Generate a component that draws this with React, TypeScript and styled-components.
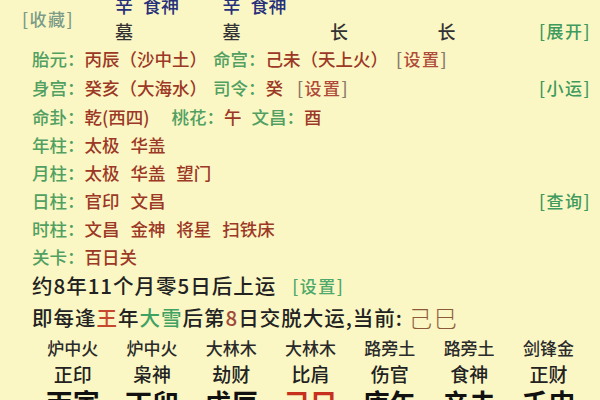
import React from 'react';
import styled, { createGlobalStyle } from 'styled-components';

const Global = createGlobalStyle`
  html, body { margin: 0; padding: 0; background: #fbf7c4; }
  body { font-family: "Noto Sans CJK SC", "Noto Sans", sans-serif; font-weight: 500; }
`;

const Page = styled.div`
  width: 600px;
  height: 400px;
  overflow: hidden;
  background: #fbf7c4;
`;

const Header = styled.div`
  display: grid;
  grid-template-columns: 115px repeat(3, 107.5px) 1fr auto;
  grid-template-rows: 26px 26px;
  margin-top: -8px;
  padding-right: 9px;
  font-size: 18px;
  line-height: 26px;
`;

const BracketLink = styled.span`
  font-size: 17px;
  letter-spacing: 1.5px;
  white-space: nowrap;
`;

const Collect = styled(BracketLink)`
  grid-row: 1 / 3;
  grid-column: 1;
  align-self: center;
  padding-left: 22px;
  padding-top: 2px;
  color: #7c9c88;
`;

const GodCell = styled.div<{ $col: number }>`
  grid-row: 1;
  grid-column: ${(p) => p.$col};
  color: #27307a;
  word-spacing: 6px;
`;

const StageCell = styled.div<{ $col: number }>`
  grid-row: 2;
  grid-column: ${(p) => p.$col};
  color: #333;
`;

const SideLink = styled(BracketLink)`
  margin-left: auto;
  color: #3f9a5e;
`;

const Expand = styled(SideLink)`
  grid-row: 2;
  grid-column: 6;
`;

const Info = styled.div`
  padding: 0 9px 0 32px;
  font-size: 17.5px;
`;

const Row = styled.div<{ $h?: number }>`
  display: flex;
  align-items: center;
  height: ${(p) => p.$h ?? 28}px;
  white-space: nowrap;
`;

const Label = styled.span<{ $ml?: number }>`
  color: #51a062;
  margin-left: ${(p) => p.$ml ?? 0}px;
`;

const Val = styled.span<{ $ml?: number }>`
  color: #9c3826;
  word-spacing: 7px;
  margin-left: ${(p) => p.$ml ?? 0}px;
`;

const Setting = styled(BracketLink)<{ $ml?: number }>`
  color: #b04a3a;
  margin-left: ${(p) => p.$ml ?? 0}px;
`;

const Bracket = styled.span`
  color: #8a7a6a;
`;

const Plain = styled.span<{ $size?: number }>`
  color: #222;
  font-size: ${(p) => p.$size ?? 20.5}px;
  letter-spacing: 1px;
`;

const GreenSetting = styled(BracketLink)`
  color: #4ea86a;
  margin-left: 16px;
`;

const Accent = styled.span<{ $c: string }>`
  color: ${(p) => p.$c};
`;

const Current = styled.span`
  color: #8c5a3a;
  font-size: 23px;
  font-weight: 300;
  letter-spacing: 2px;
  margin-left: 6px;
`;

const Luck = styled.div`
  display: grid;
  grid-template-columns: repeat(7, 79.3px);
  margin-left: 33px;
  text-align: center;
`;

const Nayin = styled.div`
  font-size: 17px;
  line-height: 27px;
  color: #2a2a2a;
`;

const Shishen = styled.div`
  font-size: 19px;
  line-height: 26px;
  color: #222;
`;

const Ganzhi = styled.div<{ $cur?: boolean }>`
  font-size: 27px;
  font-weight: 700;
  line-height: 32px;
  color: ${(p) => (p.$cur ? '#c8301e' : '#111')};
`;

const luck = [
  { n: '炉中火', s: '正印', g: '丙寅' },
  { n: '炉中火', s: '枭神', g: '丁卯' },
  { n: '大林木', s: '劫财', g: '戊辰' },
  { n: '大林木', s: '比肩', g: '己巳', cur: true },
  { n: '路旁土', s: '伤官', g: '庚午' },
  { n: '路旁土', s: '食神', g: '辛未' },
  { n: '剑锋金', s: '正财', g: '壬申' },
];

export default function App() {
  return (
    <Page>
      <Global />
      <Header>
        <Collect>[收藏]</Collect>
        <GodCell $col={2}>辛 食神</GodCell>
        <GodCell $col={3}>辛 食神</GodCell>
        <StageCell $col={2}>墓</StageCell>
        <StageCell $col={3}>墓</StageCell>
        <StageCell $col={4}>长</StageCell>
        <StageCell $col={5}>长</StageCell>
        <Expand>[展开]</Expand>
      </Header>
      <Info>
        <Row>
          <Label>胎元：</Label>
          <Val>丙辰（沙中土）</Val>
          <Label $ml={6}>命宫：</Label>
          <Val>己未（天上火）</Val>
          <Setting $ml={8}>
            <Bracket>[</Bracket>设置<Bracket>]</Bracket>
          </Setting>
        </Row>
        <Row $h={30}>
          <Label>身宫：</Label>
          <Val>癸亥（大海水）</Val>
          <Label $ml={6}>司令：</Label>
          <Val>癸</Val>
          <Setting $ml={14}>
            <Bracket>[</Bracket>设置<Bracket>]</Bracket>
          </Setting>
          <SideLink>[小运]</SideLink>
        </Row>
        <Row>
          <Label>命卦：</Label>
          <Val>乾(西四)</Val>
          <Label $ml={22}>桃花：</Label>
          <Val>午</Val>
          <Label $ml={10}>文昌：</Label>
          <Val>酉</Val>
        </Row>
        <Row>
          <Label>年柱：</Label>
          <Val>太极 华盖</Val>
        </Row>
        <Row>
          <Label>月柱：</Label>
          <Val>太极 华盖 望门</Val>
        </Row>
        <Row>
          <Label>日柱：</Label>
          <Val>官印 文昌</Val>
          <SideLink>[查询]</SideLink>
        </Row>
        <Row>
          <Label>时柱：</Label>
          <Val>文昌 金神 将星 扫铁床</Val>
        </Row>
        <Row>
          <Label>关卡：</Label>
          <Val>百日关</Val>
        </Row>
        <Row $h={30}>
          <Plain>约8年11个月零5日后上运</Plain>
          <GreenSetting>[设置]</GreenSetting>
        </Row>
        <Row $h={34}>
          <Plain>
            即每逢<Accent $c="#c8482e">王</Accent>年<Accent $c="#3fa262">大雪</Accent>后第
            <Accent $c="#a04a3a">8</Accent>日交脱大运,当前:
          </Plain>
          <Current>己巳</Current>
        </Row>
      </Info>
      <Luck>
        {luck.map((l, i) => (
          <Nayin key={'n' + i}>{l.n}</Nayin>
        ))}
        {luck.map((l, i) => (
          <Shishen key={'s' + i}>{l.s}</Shishen>
        ))}
        {luck.map((l, i) => (
          <Ganzhi key={'g' + i} $cur={l.cur}>
            {l.g}
          </Ganzhi>
        ))}
      </Luck>
    </Page>
  );
}
